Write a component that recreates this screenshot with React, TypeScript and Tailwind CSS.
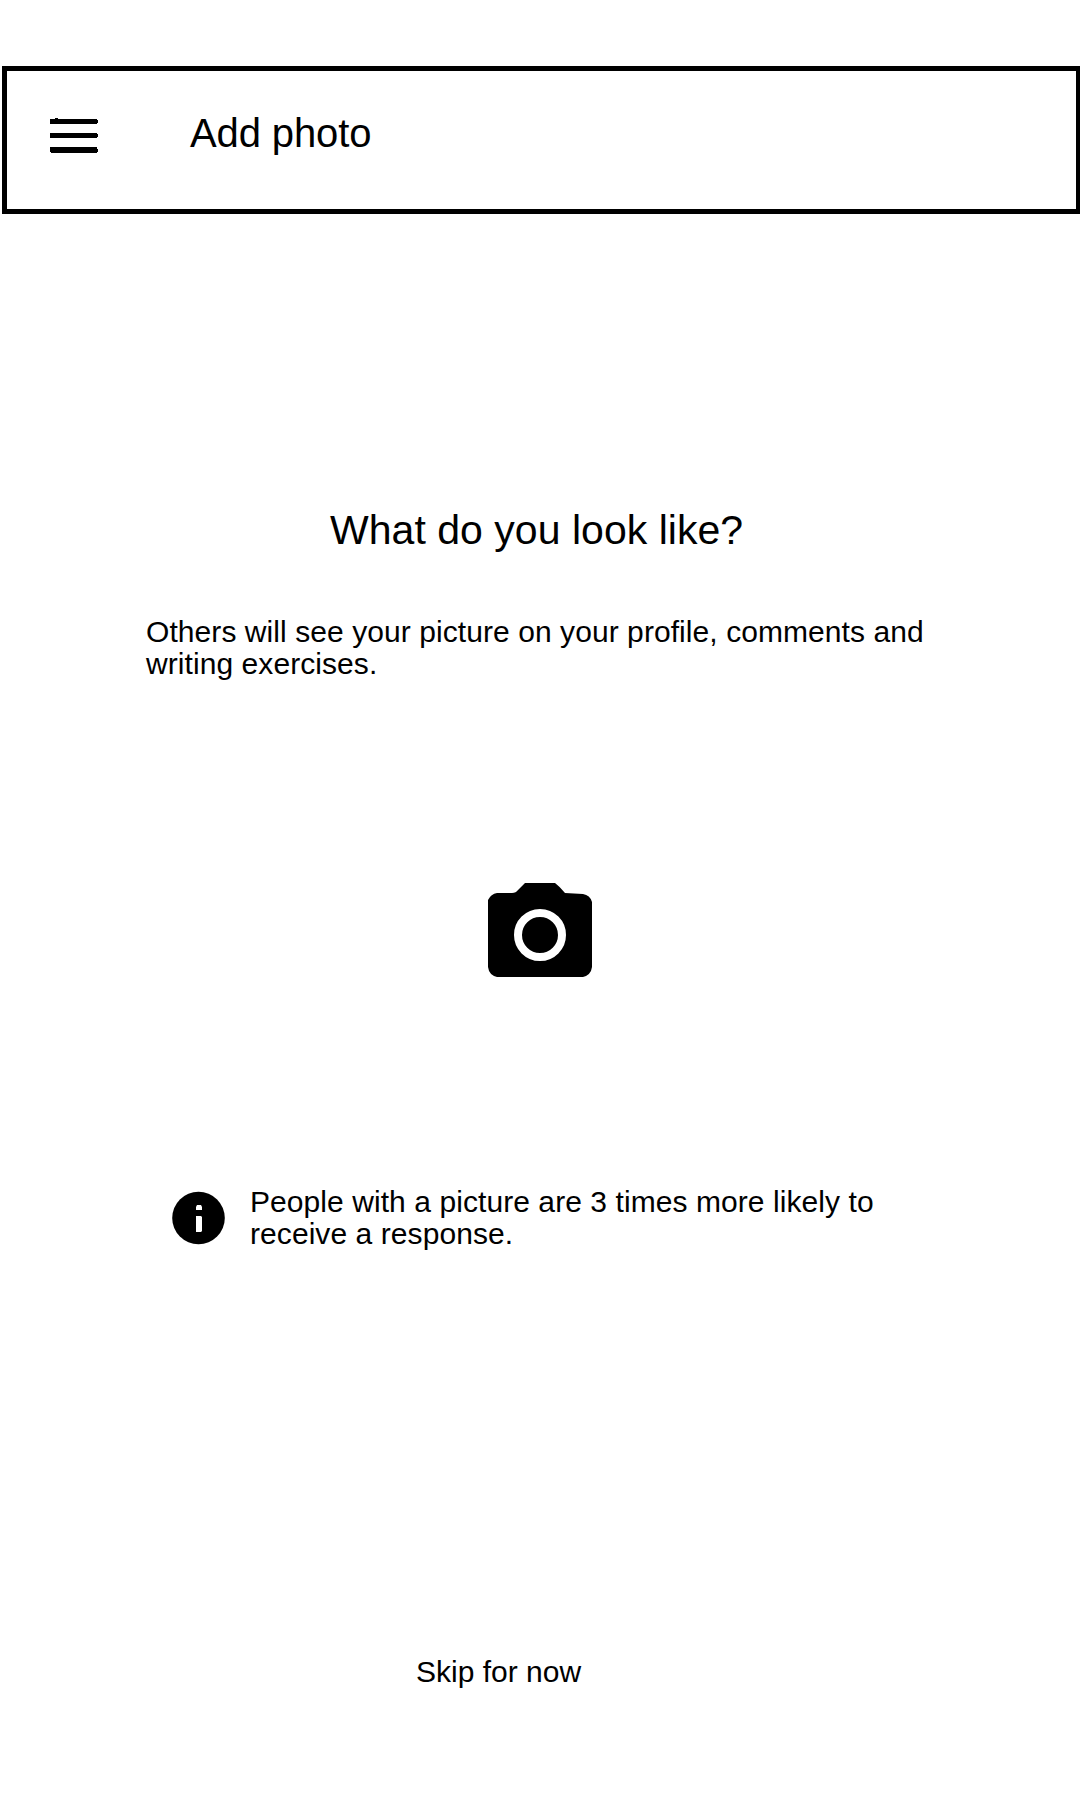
export default function App() {
  return (
    <main className="flex h-[1800px] w-[1080px] flex-col overflow-hidden bg-white pt-[66px] font-['Liberation_Sans',sans-serif] text-black">
      <header className="ml-[2px] flex h-[148px] w-[1079px] shrink-0 border-[5px] border-black pl-[42px] pt-[39px]">
        <button aria-label="Menu" className="mt-[6px] h-[42px] w-[50px]">
          <svg className="h-[42px] w-[50px]" viewBox="0 0 50 42">
            <path d="M1 3H6V2H9V3H48V4H49V7H48V8H1ZM1 17H48V18H49V21H48V22H1ZM1 31H48V33H49V36H48V37H2V36H1Z" />
          </svg>
        </button>
        <h1 className="ml-[91px] text-[40px] leading-[46px] tracking-[-0.12px]">Add photo</h1>
      </header>
      <h2 className="ml-[330px] mt-[292px] whitespace-nowrap text-[41px] leading-[48px] tracking-[0.03px]">What do you look like?</h2>
      <p className="ml-[146px] mt-[62px] whitespace-nowrap text-[30px] leading-[32px] tracking-[0.07px]">
        Others will see your picture on your profile, comments and<br />writing exercises.
      </p>
      <button aria-label="Take photo" className="ml-[488px] mt-[203px] h-[94px] w-[104px] shrink-0">
        <svg className="h-[94px] w-[104px]" viewBox="0 0 104 94">
          <path d="M37 0H67Q70 2 77 10L95 11Q102 12 104 19V84Q103 92 95 94H9Q1 92 0 84V17Q3 11 9 10H24Q28 10 30 7Z" />
          <circle cx="52" cy="52" r="22" fill="none" stroke="white" strokeWidth="8" />
        </svg>
      </button>
      <div className="ml-[172px] mt-[209px] flex">
        <svg className="mt-[5px] h-[54px] w-[54px]" viewBox="0 0 54 54">
          <circle cx="26.5" cy="27" r="26.3" />
          <path d="M25 14H29L30 16V19H24V16ZM24 25H29L30 26V40L29 41H24Z" fill="white" />
        </svg>
        <p className="ml-[24px] whitespace-nowrap text-[30px] leading-[32px] tracking-[0.07px]">
          People with a picture are 3 times more likely to<br />receive a response.
        </p>
      </div>
      <button className="ml-[416px] mt-[405px] w-fit text-[30px] leading-[33px]">Skip for now</button>
    </main>
  );
}
